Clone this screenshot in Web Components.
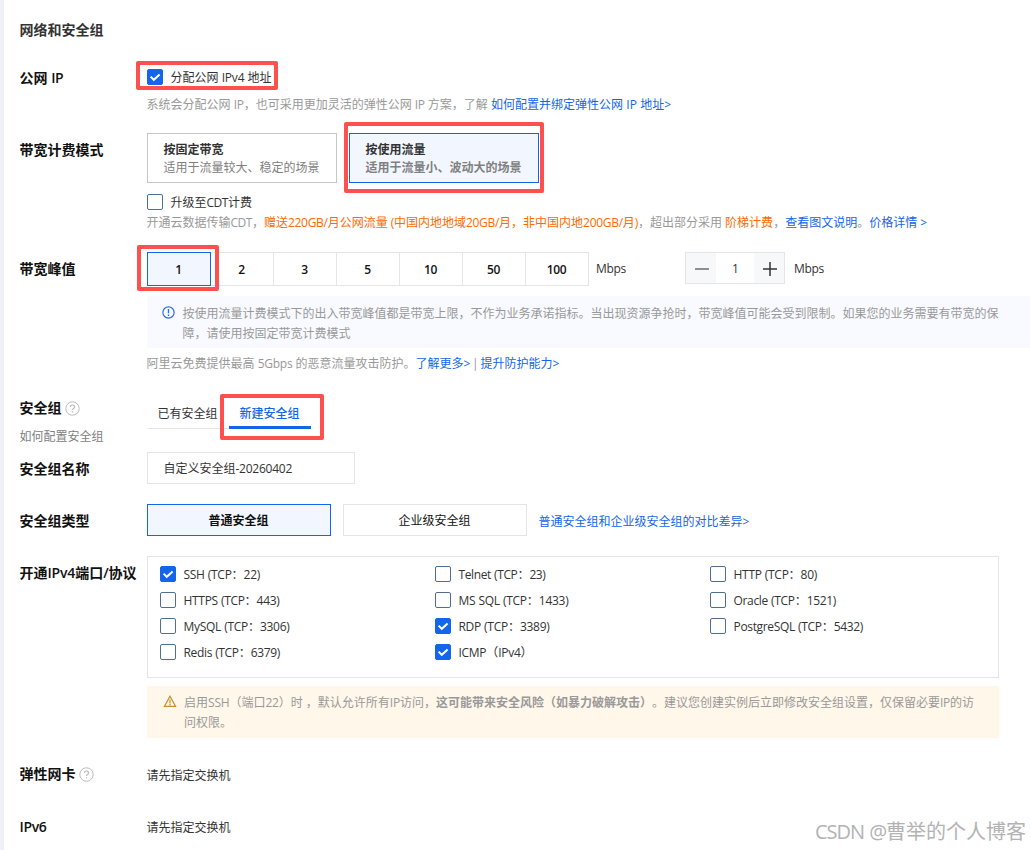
<!DOCTYPE html>
<html lang="zh-CN">
<head>
<meta charset="utf-8">
<title>网络和安全组</title>
<style>
    body {
        margin: 0;
        height: 850px;
        overflow: hidden;
        box-sizing: border-box;
        border-left: 4px solid #eff1f6;
        background: #fff;
        color: #333;
        font: 12px/20px "Open Sans", "Noto Sans CJK SC", sans-serif;
        text-spacing-trim: space-all;
    }
    h2 {
        margin: 0;
        height: 61px;
        padding-left: 15.5px;
        font-size: 14px;
        line-height: 60px;
        font-weight: 700;
    }
    a { color: #1366ec; text-decoration: none; }
    em { color: #ff6a00; font-style: normal; }
    .line { display: flex; height: 20px; margin-left: -.5px; color: #999; white-space: pre; }
    .line b { font-weight: 700; }
    .flex { display: flex; }
</style>
</head>
<body>
<h2>网络和安全组</h2>

<form-row style="--h:72px">
    <ui-text slot="label" w="43.5">公网 IP</ui-text>
    <check-box checked style="margin-top:6px"><ui-text w="101">分配公网 IPv4 地址</ui-text></check-box>
    <div class="line" style="margin-top:8px"><ui-text w="344.5">系统会分配公网 IP，也可采用更加灵活的弹性公网 IP 方案，了解 </ui-text><a><ui-text w="180.5">如何配置并绑定弹性公网 IP 地址></ui-text></a></div>
</form-row>

<form-row style="--h:119px">
    <span slot="label">带宽计费模式</span>
    <div class="flex" style="gap:12px">
        <option-card><span slot="title">按固定带宽</span>适用于流量较大、稳定的场景</option-card>
        <option-card selected><span slot="title">按使用流量</span>适用于流量小、波动大的场景</option-card>
    </div>
    <check-box style="margin-top:9px"><ui-text w="81.5">升级至CDT计费</ui-text></check-box>
    <div class="line" style="margin-top:1px"><ui-text w="117.5">开通云数据传输CDT，</ui-text><em><ui-text w="374">赠送220GB/月公网流量 (中国内地地域20GB/月，非中国内地200GB/月)</ui-text></em><ui-text w="87">，超出部分采用 </ui-text><em>阶梯计费</em>，<a>查看图文说明</a>。<a><ui-text w="59">价格详情 ></ui-text></a></div>
</form-row>

<form-row style="--h:139px">
    <span slot="label">带宽峰值</span>
    <div class="flex">
        <seg-group values="1,2,3,5,10,50,100"></seg-group>
        <ui-text w="30" style="margin:7px 59px 0 7px">Mbps</ui-text>
        <num-stepper value="1"></num-stepper>
        <ui-text w="30" style="margin:7px 0 0 9px">Mbps</ui-text>
    </div>
    <notice-bar style="margin-top:10px">按使用流量计费模式下的出入带宽峰值都是带宽上限，不作为业务承诺指标。当出现资源争抢时，带宽峰值可能会受到限制。如果您的业务需要有带宽的保<br>障，请使用按固定带宽计费模式</notice-bar>
    <div class="line" style="margin-top:6px"><ui-text w="269">阿里云免费提供最高 5Gbps 的恶意流量攻击防护。</ui-text><a><ui-text w="54.5">了解更多></ui-text></a><span style="width:10.5px;text-align:center;white-space:normal">|</span><a><ui-text w="80">提升防护能力></ui-text></a></div>
</form-row>

<form-row style="--h:61px">
    <span slot="label">安全组</span>
    <help-icon slot="label"></help-icon>
    <span slot="hint">如何配置安全组</span>
    <tab-bar><span>已有安全组</span><span class="active">新建安全组</span></tab-bar>
</form-row>

<form-row style="--h:52px">
    <span slot="label">安全组名称</span>
    <text-field><ui-text w="128.5">自定义安全组-20260402</ui-text></text-field>
</form-row>

<form-row style="--h:52px">
    <span slot="label">安全组类型</span>
    <div class="flex" style="gap:12px">
        <type-button selected>普通安全组</type-button>
        <type-button>企业级安全组</type-button>
        <a style="margin:8px 0 0 -.5px"><ui-text w="211">普通安全组和企业级安全组的对比差异></ui-text></a>
    </div>
</form-row>

<form-row style="--h:201px">
    <ui-text slot="label" w="117">开通IPv4端口/协议</ui-text>
    <port-grid>
        <check-box checked><ui-text w="76.5">SSH (TCP：22)</ui-text></check-box>
        <check-box><ui-text w="87">Telnet (TCP：23)</ui-text></check-box>
        <check-box><ui-text w="83.5">HTTP (TCP：80)</ui-text></check-box>
        <check-box><ui-text w="96">HTTPS (TCP：443)</ui-text></check-box>
        <check-box><ui-text w="110">MS SQL (TCP：1433)</ui-text></check-box>
        <check-box><ui-text w="102.5">Oracle (TCP：1521)</ui-text></check-box>
        <check-box><ui-text w="106">MySQL (TCP：3306)</ui-text></check-box>
        <check-box checked><ui-text w="91">RDP (TCP：3389)</ui-text></check-box>
        <check-box><ui-text w="129.5">PostgreSQL (TCP：5432)</ui-text></check-box>
        <check-box><ui-text w="96.5">Redis (TCP：6379)</ui-text></check-box>
        <check-box checked><ui-text w="74">ICMP（IPv4）</ui-text></check-box>
    </port-grid>
    <notice-bar type="warning" style="margin-top:8px;width:852px"><ui-text w="252">启用SSH（端口22）时 ，默认允许所有IP访问，</ui-text><b>这可能带来安全风险（如暴力破解攻击）</b><ui-text w="322">。建议您创建实例后立即修改安全组设置，仅保留必要IP的访</ui-text><br>问权限。</notice-bar>
</form-row>

<form-row style="--h:53px">
    <span slot="label">弹性网卡</span>
    <help-icon slot="label"></help-icon>
    <div style="margin:9px 0 0 -.5px">请先指定交换机</div>
</form-row>

<form-row style="--h:40px">
    <ui-text slot="label" w="27">IPv6</ui-text>
    <div style="margin:8px 0 0 -.5px">请先指定交换机</div>
</form-row>

<mark-frame style="left:136px;top:61px;width:142px;height:29px"></mark-frame>
<mark-frame style="left:344px;top:122px;width:200px;height:71px"></mark-frame>
<mark-frame style="left:137px;top:245px;width:82px;height:46px"></mark-frame>
<mark-frame style="left:220px;top:394px;width:104px;height:46px"></mark-frame>
<water-mark><ui-text w="211">CSDN @曹举的个人博客</ui-text></water-mark>

<script>
// every element only differs in its markup, so they share one base
class Base extends HTMLElement {
    constructor() {
        super();
        this.attachShadow({ mode: 'open' });
        this.shadowRoot.innerHTML = this.render();
    }
    render() { return '<slot></slot>'; }
}

class FormRow extends Base {
    render() {
        return `<style>
            :host { display: grid; grid-template-columns: 127.5px 1fr; height: var(--h); padding-left: 15.5px; }
            .label { display: flex; align-items: center; gap: 3.5px; height: 20px; margin-top: 7px; font-size: 14px; font-weight: 600; color: #111; white-space: nowrap; }
            .hint { margin-top: 9px; color: #808080; }
            .content { min-width: 0; }
        </style>
        <div><div class="label"><slot name="label"></slot></div><div class="hint"><slot name="hint"></slot></div></div>
        <div class="content"><slot></slot></div>`;
    }
}

class CheckBox extends Base {
    render() {
        const on = this.hasAttribute('checked');
        return `<style>
            :host { display: flex; align-items: center; height: 20px; }
            i { box-sizing: border-box; width: 16px; height: 16px; margin-right: 7.5px; border: 1px solid #507092; border-radius: 2px; background: #fff; }
            i.on { background: #1366ec; border-color: #1366ec; }
            svg { display: block; margin: -1px; }
            ::slotted(*) { margin-top: 2px; }
        </style>
        <i class="${on ? 'on' : ''}">${on ? '<svg width="16" height="16" viewBox="0 0 16 16"><path d="M3.6 7.6l3.2 3.2 5.8-5.4" fill="none" stroke="#fff" stroke-width="2"/></svg>' : ''}</i>
        <slot></slot>`;
    }
}

class OptionCard extends Base {
    render() {
        return `<style>
            :host { display: block; box-sizing: border-box; width: 190px; height: 50px; padding: 7px 15.5px; border: 1px solid #c4c6cc; line-height: 18px; color: #808080; white-space: nowrap; }
            :host([selected]) { border-color: #1366ec; background: #f2f7ff; font-weight: 700; }
            div { font-weight: 700; color: #333; }
        </style>
        <div><slot name="title"></slot></div><slot></slot>`;
    }
}

class SegGroup extends Base {
    render() {
        const cells = this.getAttribute('values').split(',').map(v => `<span>${v}</span>`).join('');
        return `<style>
            :host { display: flex; }
            span { box-sizing: border-box; width: 63px; height: 34px; padding-right: 1px; border: 1px solid #e5e5e5; border-left: 0; line-height: 33px; text-align: center; font-weight: 600; color: #111; letter-spacing: -.3px; }
            span:first-of-type { width: 64px; border: 1px solid #1366ec; background: #f2f7ff; }
        </style>${cells}`;
    }
}

class NumStepper extends Base {
    render() {
        return `<style>
            :host { display: flex; box-sizing: border-box; width: 100px; height: 32px; border: 1px solid #e5e5e5; }
            i { width: 30px; background: #f7f8fa; }
            span { flex: 1; padding-left: 1px; line-height: 32px; text-align: center; }
            svg { display: block; }
        </style>
        <i><svg width="30" height="30"><path d="M9 16h14" stroke="#555" stroke-width="1.3"/></svg></i>
        <span>${this.getAttribute('value')}</span>
        <i><svg width="30" height="30"><path d="M9 16h14M16 9v14" stroke="#333" stroke-width="1.5"/></svg></i>`;
    }
}

class NoticeBar extends Base {
    render() {
        const warn = this.getAttribute('type') == 'warning';
        const icon = warn
            ? '<svg width="14" height="14" viewBox="0 0 14 14" fill="none" stroke="#c69026" stroke-width="1.2"><path d="M7 1.2L12.6 11.4H1.4z"/><path d="M7 4.6v3.8M7 9v1.4"/></svg>'
            : '<svg width="14" height="14" viewBox="0 0 14 14" fill="none" stroke="#2f6bf0" stroke-width="1.2"><circle cx="6.5" cy="7.5" r="5.6"/><path d="M6.5 4.1v4.2M6.5 9.5v1.4" stroke-width="1.4"/></svg>';
        return `<style>
            :host { display: flex; box-sizing: border-box; height: 52px; padding: 8px 0 0 15px; background: #f8faff; color: #999; white-space: nowrap; }
            :host([type=warning]) { padding: 7px 0 0 16px; background: #fff7ea; }
            svg { flex: none; margin: 1px 6.5px 0 0; }
            :host([type=warning]) svg { margin: 2px 7px 0 0; }
        </style>${icon}<div><slot></slot></div>`;
    }
}

class HelpIcon extends Base {
    render() {
        return `<style>:host { display: block; width: 15px; height: 15px; } svg { display: block; }</style>
        <svg width="15" height="15" viewBox="0 0 15 15" fill="none" stroke="#bbb"><circle cx="7.5" cy="7.5" r="6.7"/><path d="M5.4 6.1c0-2.8 4.2-2.7 4.2-.2 0 1.5-2.1 1.5-2.1 3.1M7.5 10.2v1.3" stroke-width="1.2"/></svg>`;
    }
}

class TabBar extends Base {
    render() {
        return `<style>
            :host { display: flex; box-sizing: border-box; width: 164px; height: 38px; border-bottom: 1px solid #e5e5e5; line-height: 45px; }
            ::slotted(span) { box-sizing: border-box; width: 82px; height: 38px; padding-left: 10.5px; }
            ::slotted(.active) { border-bottom: 3px solid #1366ec; color: #1366ec; font-weight: 500; }
        </style><slot></slot>`;
    }
}

class TextField extends Base {
    render() {
        return `<style>:host { display: block; box-sizing: border-box; width: 208px; height: 32px; padding-left: 15.5px; border: 1px solid #e5e5e5; line-height: 31px; }</style><slot></slot>`;
    }
}

class TypeButton extends Base {
    render() {
        return `<style>
            :host { display: block; box-sizing: border-box; width: 184px; height: 32px; padding-right: 1px; border: 1px solid #e5e5e5; line-height: 31px; text-align: center; color: #111; }
            :host([selected]) { border-color: #1366ec; background: #f2f7ff; font-weight: 700; }
        </style><slot></slot>`;
    }
}

class PortGrid extends Base {
    render() {
        return `<style>:host { display: grid; box-sizing: border-box; width: 852px; height: 122px; padding: 7px 0 0 12px; border: 1px solid #e5e5e5; grid-template-columns: repeat(3, 275px); grid-auto-rows: 20px; row-gap: 6px; }</style><slot></slot>`;
    }
}

// red box laid over the form
class MarkFrame extends Base {
    render() {
        return `<style>:host { position: absolute; box-sizing: border-box; border: 4px solid #ff5050; border-radius: 2px; }</style>`;
    }
}

class WaterMark extends Base {
    render() {
        return `<style>:host { position: absolute; left: 815px; top: 817px; font-size: 20px; line-height: 30px; color: #b3b3b3; text-shadow: 1px 1px 1px #fff; }</style><slot></slot>`;
    }
}

// text with a fixed width: the latin letters are tightened until the line fits,
// spaces keep their own width
class UiText extends Base {
    render() {
        return `<style>:host { display: inline-block; white-space: pre; }</style><slot></slot>`;
    }
    connectedCallback() {
        const text = this.textContent;
        this.innerHTML = text.replace(/[\x21-\x7e]+/g, m => `<span>${m.replace(/>/g, '&gt;')}</span>`);
        const count = text.replace(/[^\x21-\x7e]/g, '').length;
        if (!count) return;
        const gap = (this.getAttribute('w') - this.getBoundingClientRect().width) / count;
        this.querySelectorAll('span').forEach(s => s.style.letterSpacing = gap + 'px');
    }
}

customElements.define('form-row', FormRow);
customElements.define('check-box', CheckBox);
customElements.define('option-card', OptionCard);
customElements.define('seg-group', SegGroup);
customElements.define('num-stepper', NumStepper);
customElements.define('notice-bar', NoticeBar);
customElements.define('help-icon', HelpIcon);
customElements.define('tab-bar', TabBar);
customElements.define('text-field', TextField);
customElements.define('type-button', TypeButton);
customElements.define('port-grid', PortGrid);
customElements.define('mark-frame', MarkFrame);
customElements.define('water-mark', WaterMark);
customElements.define('ui-text', UiText);
</script>
</body>
</html>
